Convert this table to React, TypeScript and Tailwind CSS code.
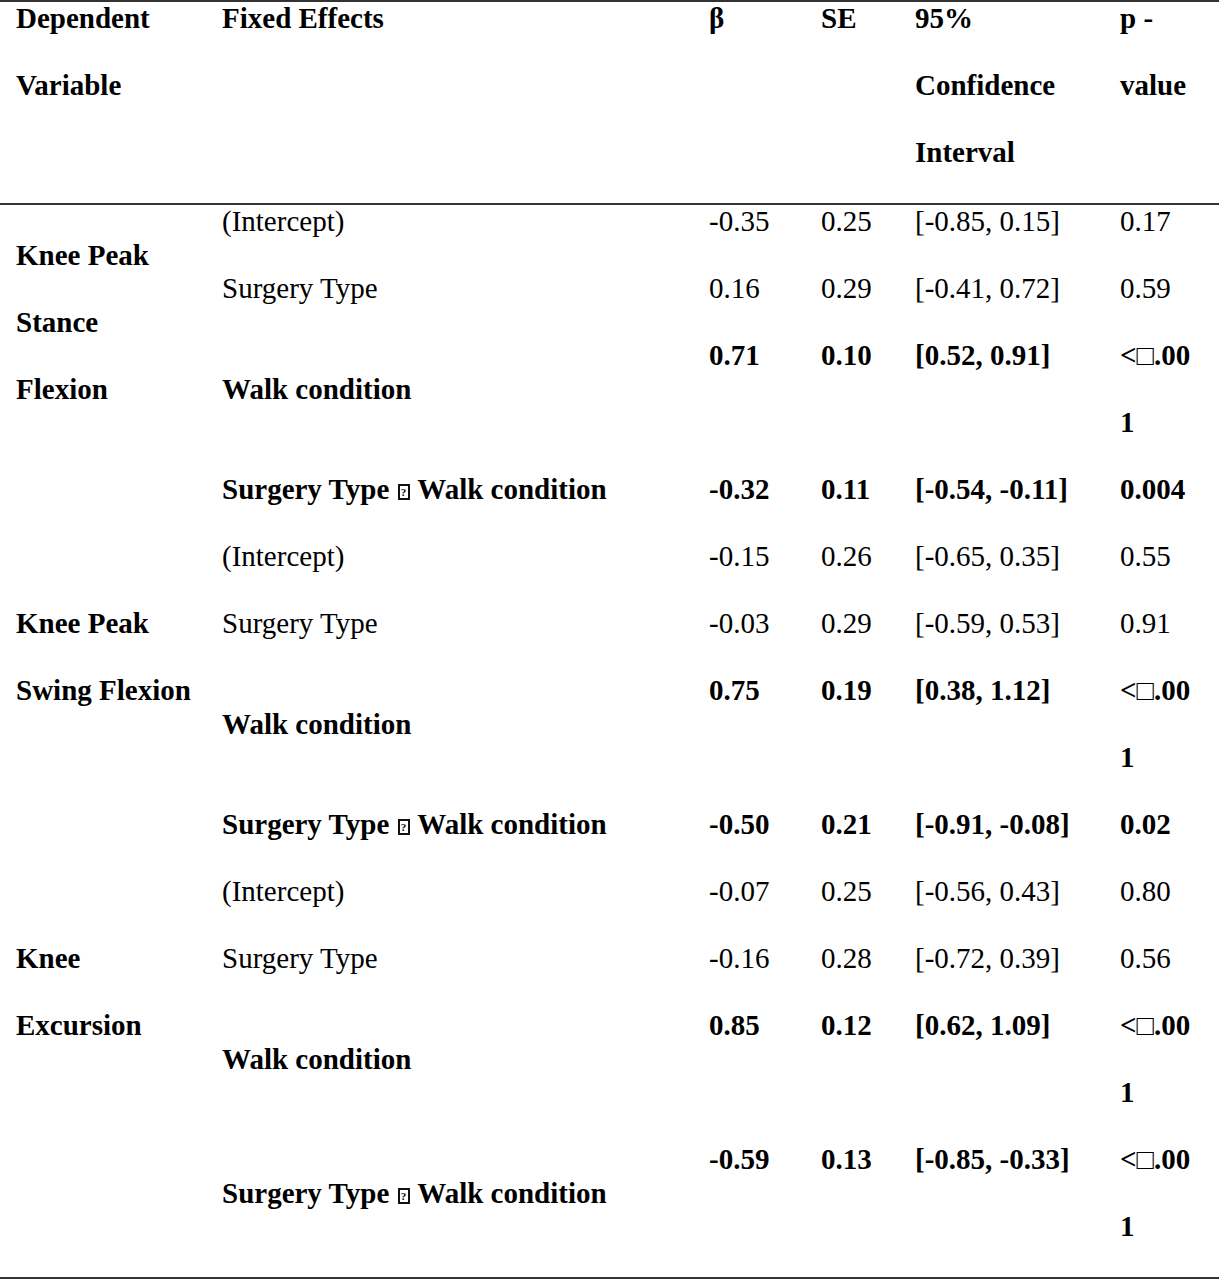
type Row = {
  effect: string
  interaction?: boolean
  beta: string
  se: string
  ci: string
  p: string
  pWrap?: boolean
  bold?: boolean
}

type Group = {
  variable: string[]
  rows: Row[]
}

const groups: Group[] = [
  {
    variable: ['Knee Peak', 'Stance', 'Flexion'],
    rows: [
      { effect: '(Intercept)', beta: '-0.35', se: '0.25', ci: '[-0.85, 0.15]', p: '0.17' },
      { effect: 'Surgery Type', beta: '0.16', se: '0.29', ci: '[-0.41, 0.72]', p: '0.59' },
      { effect: 'Walk condition', beta: '0.71', se: '0.10', ci: '[0.52, 0.91]', p: '', pWrap: true, bold: true },
      { effect: '', interaction: true, beta: '-0.32', se: '0.11', ci: '[-0.54, -0.11]', p: '0.004', bold: true },
    ],
  },
  {
    variable: ['Knee Peak', 'Swing Flexion'],
    rows: [
      { effect: '(Intercept)', beta: '-0.15', se: '0.26', ci: '[-0.65, 0.35]', p: '0.55' },
      { effect: 'Surgery Type', beta: '-0.03', se: '0.29', ci: '[-0.59, 0.53]', p: '0.91' },
      { effect: 'Walk condition', beta: '0.75', se: '0.19', ci: '[0.38, 1.12]', p: '', pWrap: true, bold: true },
      { effect: '', interaction: true, beta: '-0.50', se: '0.21', ci: '[-0.91, -0.08]', p: '0.02', bold: true },
    ],
  },
  {
    variable: ['Knee', 'Excursion'],
    rows: [
      { effect: '(Intercept)', beta: '-0.07', se: '0.25', ci: '[-0.56, 0.43]', p: '0.80' },
      { effect: 'Surgery Type', beta: '-0.16', se: '0.28', ci: '[-0.72, 0.39]', p: '0.56' },
      { effect: 'Walk condition', beta: '0.85', se: '0.12', ci: '[0.62, 1.09]', p: '', pWrap: true, bold: true },
      { effect: '', interaction: true, beta: '-0.59', se: '0.13', ci: '[-0.85, -0.33]', p: '', pWrap: true, bold: true },
    ],
  },
]

const cols = 'grid grid-cols-[206px_487px_112px_94px_205px_1fr]'
const cell = 'pl-4 -mt-[17px] mb-[17px] leading-[67px]'

// missing-glyph box between "Surgery Type" and "Walk condition"
function QBox() {
  return (
    <span className="mx-[1px] inline-block h-[16px] w-[12px] overflow-hidden border-2 border-[#111] text-center align-[-1px] text-[11px] font-bold leading-[12px]">
      ?
    </span>
  )
}

function SmallP() {
  return (
    <>
      &lt;<span className="font-normal">{'\u25A1'}</span>.00
      <br />1
    </>
  )
}

function Effect({ row }: { row: Row }) {
  if (row.interaction) {
    return (
      <>
        Surgery Type{' '}
        <QBox />{' '}
        Walk condition
      </>
    )
  }
  return <>{row.effect}</>
}

export default function App() {
  return (
    <div
      className="w-[1219px] bg-white text-[29px] text-black"
      style={{ fontFamily: '"Liberation Serif", "Times New Roman", serif' }}
    >
      <div className="border-t-2 border-b-2 border-[#333]">
        {/* header */}
        <div className={`${cols} border-b-2 border-[#333] font-bold`}>
          <div className={cell}>
            Dependent
            <br />
            Variable
          </div>
          <div className={cell}>Fixed Effects</div>
          <div className={cell}>β</div>
          <div className={cell}>SE</div>
          <div className={cell}>
            95%
            <br />
            Confidence
            <br />
            Interval
          </div>
          <div className={cell}>
            p -
            <br />
            value
          </div>
        </div>

        {groups.map((g) => (
          <div key={g.variable.join(' ')} className={cols}>
            <div className={`${cell} col-start-1 row-span-3 row-start-1 self-center font-bold`}>
              {g.variable.map((line, i) => (
                <span key={line}>
                  {i > 0 && <br />}
                  {line}
                </span>
              ))}
            </div>
            {g.rows.map((r, i) => {
              const w = r.bold ? 'font-bold' : ''
              const rowStyle = { gridRow: i + 1 }
              return (
                <div key={r.beta} className="contents">
                  <div className={`${cell} ${w} self-center`} style={{ ...rowStyle, gridColumn: 2 }}>
                    <Effect row={r} />
                  </div>
                  <div className={`${cell} ${w} self-start`} style={{ ...rowStyle, gridColumn: 3 }}>{r.beta}</div>
                  <div className={`${cell} ${w} self-start`} style={{ ...rowStyle, gridColumn: 4 }}>{r.se}</div>
                  <div className={`${cell} ${w} self-start`} style={{ ...rowStyle, gridColumn: 5 }}>{r.ci}</div>
                  <div className={`${cell} ${w} self-start`} style={{ ...rowStyle, gridColumn: 6 }}>
                    {r.pWrap ? <SmallP /> : r.p}
                  </div>
                </div>
              )
            })}
          </div>
        ))}
      </div>
    </div>
  )
}
